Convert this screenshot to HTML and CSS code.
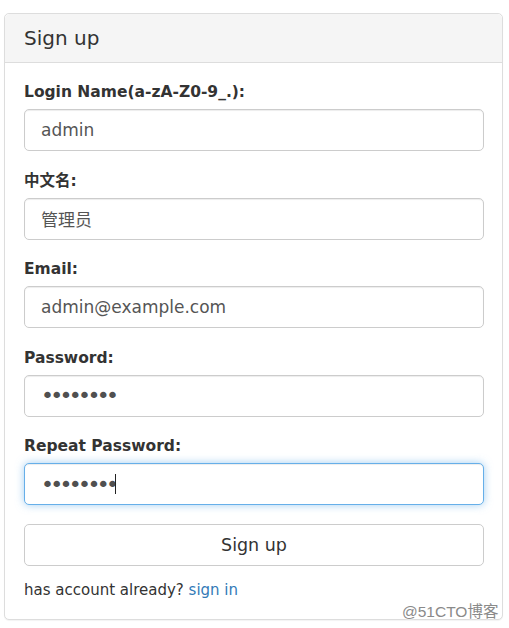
FILE: index.html
```html
<!DOCTYPE html>
<html lang="en">
<head>
<meta charset="utf-8">
<title>Sign up</title>
<link rel="stylesheet" href="styles.css">
</head>
<body>
<div class="page">
  <div class="panel">
    <div class="panel-heading">Sign up</div>
    <form class="panel-body">
      <div class="form-group">
        <label class="label">Login Name(a-zA-Z0-9_.):</label>
        <input class="input" type="text" value="admin">
      </div>
      <div class="form-group">
        <label class="label">中文名:</label>
        <input class="input" type="text" value="管理员">
      </div>
      <div class="form-group">
        <label class="label">Email:</label>
        <input class="input" type="text" value="admin@example.com">
      </div>
      <div class="form-group">
        <label class="label">Password:</label>
        <input class="input" type="password" value="12345678">
      </div>
      <div class="form-group">
        <label class="label">Repeat Password:</label>
        <div class="input-wrap">
          <input class="input input-focus" type="password" value="12345678">
          <span class="caret"></span>
        </div>
      </div>
      <button class="btn" type="button">Sign up</button>
      <p class="note">has account already? <a class="link" href="#">sign in</a></p>
    </form>
  </div>
  <div class="watermark">@51CTO博客</div>
</div>
</body>
</html>
```
FILE: styles.css
```css
* { box-sizing: border-box; }
html, body {
  margin: 0;
  padding: 0;
  background: #fff;
}
body {
  font-family: "DejaVu Sans", Verdana, sans-serif;
  color: #333;
}
.page {
  position: relative;
  width: 509px;
  height: 628px;
  padding-top: 13px;
  padding-left: 4px;
}
.panel {
  width: 499px;
  border: 1px solid #ddd;
  border-radius: 5px;
  background: #fff;
  box-shadow: 0 1px 1px rgba(0,0,0,.05);
}
.panel-heading {
  height: 49px;
  display: flex;
  align-items: center;
  padding: 0 19px 1px;
  background: #f5f5f5;
  border-bottom: 1px solid #ddd;
  border-radius: 5px 5px 0 0;
  font-size: 20px;
  color: #333;
}
.panel-body {
  padding: 18px 18px 17px 19px;
  margin: 0;
}
.form-group {
  margin-bottom: 18.5px;
}
.label {
  display: block;
  height: 20px;
  line-height: 22px;
  margin-bottom: 8px;
  font-weight: bold;
  font-size: 15.5px;
  color: #333;
  font-family: "DejaVu Sans", "Noto Sans CJK SC", sans-serif;
}
.input {
  display: block;
  width: 100%;
  height: 42px;
  padding: 0 16px;
  border: 1px solid #ccc;
  border-radius: 5px;
  font-family: "DejaVu Sans", "Noto Sans CJK SC", sans-serif;
  font-size: 17px;
  color: #555;
  background: #fff;
  box-shadow: inset 0 1px 1px rgba(0,0,0,.075);
  outline: none;
}
.input[type="password"] {
  font-size: 22px;
  letter-spacing: -3.7px;
  color: #505050;
}
.input-wrap {
  position: relative;
}
.input-focus {
  border-color: #66afe9;
  box-shadow: inset 0 1px 1px rgba(0,0,0,.075), 0 0 8px rgba(102,175,233,.6);
}
.caret {
  position: absolute;
  left: 91px;
  top: 11px;
  width: 1px;
  height: 20px;
  background: #222;
}
.btn {
  display: block;
  width: 100%;
  height: 42px;
  margin-top: 19px;
  border: 1px solid #ccc;
  border-radius: 5px;
  background: #fff;
  font-family: "DejaVu Sans", sans-serif;
  font-size: 17.5px;
  color: #333;
  padding: 0;
}
.note {
  margin: 12px 0 0;
  height: 24px;
  line-height: 24px;
  font-size: 15px;
  color: #333;
}
.link {
  color: #337ab7;
  text-decoration: none;
}
.watermark {
  position: absolute;
  left: 402px;
  top: 599px;
  font-family: "Liberation Sans", "Noto Sans CJK SC", sans-serif;
  font-size: 15.5px;
  color: #8a8a8a;
  text-shadow: 0 0 2px #fff, 0 0 2px #fff;
  white-space: nowrap;
}
```
